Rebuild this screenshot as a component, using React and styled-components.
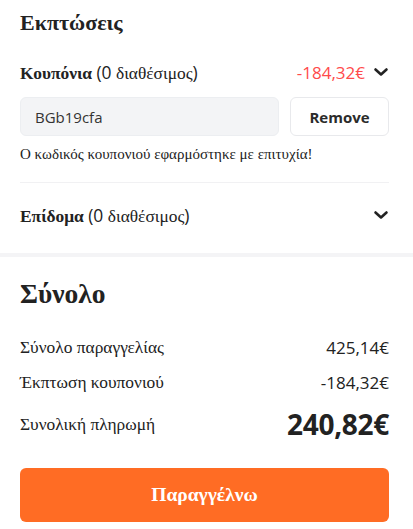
import React from "react";
import styled, { createGlobalStyle } from "styled-components";

const Global = createGlobalStyle`
  html, body { margin: 0; padding: 0; background: #fff; }
  body { color: #222; -webkit-font-smoothing: antialiased; }
  * { box-sizing: border-box; }
`;

const serif = `"Liberation Serif", "Times New Roman", serif`;
const sans = `"Open Sans", "Liberation Sans", sans-serif`;

const Page = styled.div`
  width: 413px;
  background: #fff;
`;

const Section = styled.section`
  padding: ${(p) => p.$pad || "0 24px 0 20px"};
  border-bottom: ${(p) => (p.$band ? "4px solid #f4f4f6" : "none")};
`;

const Heading = styled.h2`
  margin: 0;
  font-family: ${serif};
  font-weight: 700;
  font-size: ${(p) => p.$size || 22}px;
  line-height: ${(p) => p.$lh || 30}px;
  color: #222;
`;

const Gr = styled.span`
  font-family: ${serif};
`;
const Lat = styled.span`
  font-family: ${sans};
`;

const Row = styled.div`
  display: flex;
  align-items: center;
  justify-content: space-between;
  height: ${(p) => p.$h || 24}px;
  margin-top: ${(p) => p.$mt || 0}px;
  font-size: 17px;
  color: #222;
`;

const Label = styled.div`
  font-family: ${serif};
  font-size: 17.4px;
  color: #222;
  b { font-weight: 700; }
`;

const Right = styled.div`
  display: flex;
  align-items: center;
  gap: 8px;
`;

const Amount = styled.span`
  font-family: ${sans};
  font-size: ${(p) => p.$size || 17}px;
  font-weight: ${(p) => (p.$bold ? 700 : 400)};
  color: ${(p) => p.$color || "#222"};
  letter-spacing: ${(p) => (p.$bold ? "-0.3px" : "0")};
`;

const Chevron = styled.svg`
  width: 16px;
  height: 16px;
  flex: none;
`;

const InputRow = styled.div`
  display: flex;
  gap: 11px;
  margin-top: 13px;
`;

const CodeInput = styled.div`
  flex: 1;
  height: 39px;
  display: flex;
  align-items: center;
  padding: 0 14px;
  background: #f3f4f6;
  border: 1px solid #eceef1;
  border-radius: 6px;
  font-family: ${sans};
  font-size: 15px;
  color: #333;
`;

const RemoveButton = styled.button`
  width: 99px;
  height: 39px;
  background: #fff;
  border: 1px solid #e8e9ec;
  border-radius: 6px;
  font-family: ${sans};
  font-weight: 700;
  font-size: 15px;
  color: #2b2b2b;
  cursor: pointer;
`;

const Message = styled.p`
  margin: 9px 0 0;
  font-family: ${serif};
  font-size: 15px;
  line-height: 18px;
  color: #222;
`;

const Divider = styled.hr`
  margin: 19px 0 0;
  border: 0;
  border-top: 1px solid #f1f1f3;
`;

const Spacer = styled.div`
  height: ${(p) => p.$h}px;
`;

const OrderButton = styled.button`
  display: block;
  width: 100%;
  height: 54px;
  margin-top: 24px;
  background: #ff6c24;
  border: 0;
  border-radius: 6px;
  color: #fff;
  font-family: ${serif};
  font-weight: 700;
  font-size: 19.5px;
  cursor: pointer;
`;

const Down = () => (
  <Chevron viewBox="0 0 16 16" fill="none">
    <polyline
      points="2.5,5.5 8,10.5 13.5,5.5"
      stroke="#222"
      strokeWidth="2.6"
      strokeLinecap="round"
      strokeLinejoin="round"
    />
  </Chevron>
);

const Avail = () => (
  <>
    <Lat>(0 </Lat>
    <Gr>διαθέσιμος</Gr>
    <Lat>)</Lat>
  </>
);

export default function App() {
  return (
    <Page>
      <Global />
      <Section $pad="8px 24px 0 20px" $band>
        <Heading>Εκπτώσεις</Heading>
        <Row $mt={22}>
          <Label>
            <b>Κουπόνια</b> <Avail />
          </Label>
          <Right>
            <Amount $color="#ff4b4b">-184,32€</Amount>
            <Down />
          </Right>
        </Row>
        <InputRow>
          <CodeInput>BGb19cfa</CodeInput>
          <RemoveButton>Remove</RemoveButton>
        </InputRow>
        <Message>Ο κωδικός κουπονιού εφαρμόστηκε με επιτυχία!</Message>
        <Divider />
        <Row $mt={20}>
          <Label>
            <b>Επίδομα</b> <Avail />
          </Label>
          <Down />
        </Row>
        <Spacer $h={26} />
      </Section>

      <Section $pad="20px 24px 6px 20px">
        <Heading $size={27.5} $lh={34}>Σύνολο</Heading>
        <Row $mt={24}>
          <Label>Σύνολο παραγγελίας</Label>
          <Amount>425,14€</Amount>
        </Row>
        <Row $mt={11}>
          <Label>Έκπτωση κουπονιού</Label>
          <Amount>-184,32€</Amount>
        </Row>
        <Row $mt={10} $h={40}>
          <Label>Συνολική πληρωμή</Label>
          <Amount $size={28} $bold>240,82€</Amount>
        </Row>
        <OrderButton>Παραγγέλνω</OrderButton>
      </Section>
    </Page>
  );
}
